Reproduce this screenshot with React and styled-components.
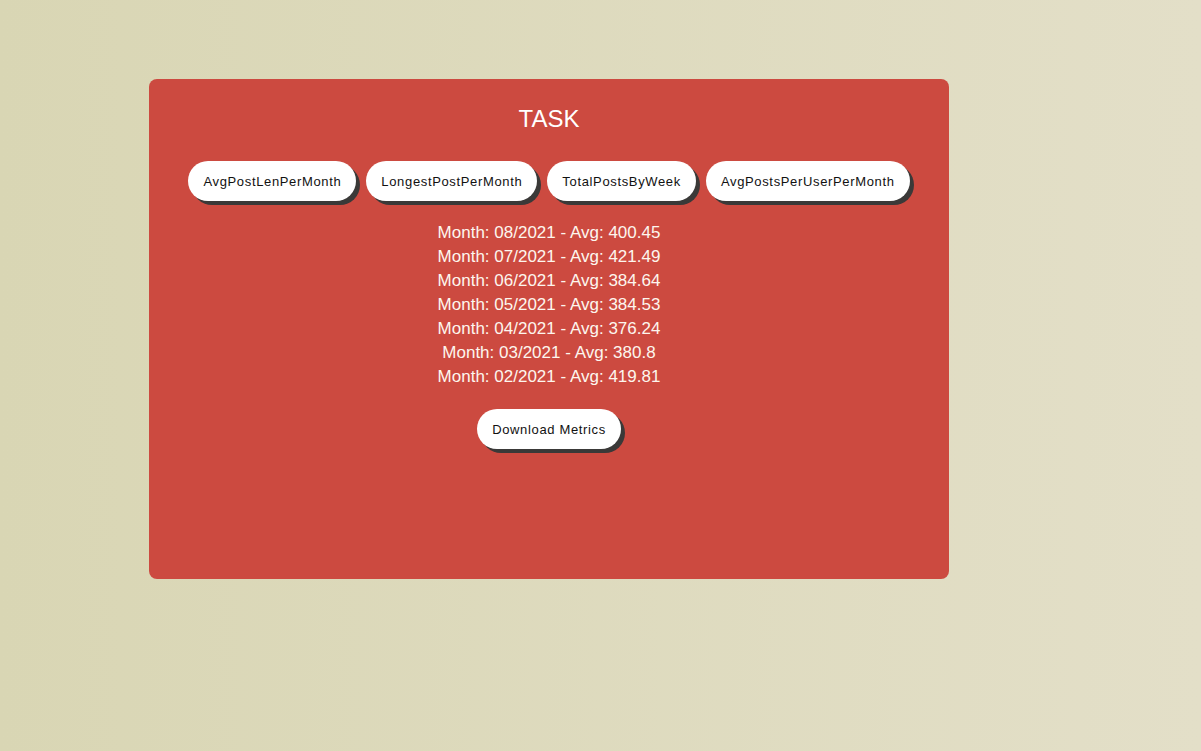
import React from 'react'
import styled, { createGlobalStyle } from 'styled-components'

const GlobalStyle = createGlobalStyle`
  html, body {
    margin: 0;
    padding: 0;
  }
  body {
    min-height: 751px;
    background: linear-gradient(to right, #d9d6b4, #e3dfc8);
    font-family: "Liberation Sans", Arial, sans-serif;
  }
`

const StyledPage = styled.div`
  padding: 79px 0 0 149px;
`

const StyledCard = styled.div`
  width: 800px;
  height: 500px;
  box-sizing: border-box;
  background: #cc4a40;
  border-radius: 8px;
  padding-top: 26px;
  display: flex;
  flex-direction: column;
  align-items: center;
`

const StyledTitle = styled.h1`
  margin: 0;
  font-size: 24px;
  line-height: 28px;
  font-weight: 400;
  color: #ffffff;
`

const StyledTabs = styled.div`
  display: flex;
  gap: 10px;
  margin-top: 28px;
`

const StyledButton = styled.button`
  height: 40px;
  padding: 0 15px;
  border: none;
  border-radius: 20px;
  background: #ffffff;
  color: #111;
  font-family: "Liberation Sans", Arial, sans-serif;
  font-size: 13px;
  letter-spacing: 0.65px;
  box-shadow: 4px 4px 0 #3a3938;
  cursor: pointer;
  margin-top: ${p => p.$spaced ? '20px' : '0'};
`

const StyledList = styled.div`
  margin-top: 20px;
  display: flex;
  flex-direction: column;
  align-items: center;
`

const StyledRow = styled.div`
  color: #fdf6ee;
  font-size: 17px;
  line-height: 24px;
`

const tabs = ['AvgPostLenPerMonth', 'LongestPostPerMonth', 'TotalPostsByWeek', 'AvgPostsPerUserPerMonth']

const metrics = [
  ['08/2021', '400.45'],
  ['07/2021', '421.49'],
  ['06/2021', '384.64'],
  ['05/2021', '384.53'],
  ['04/2021', '376.24'],
  ['03/2021', '380.8'],
  ['02/2021', '419.81'],
]

const App = () => {
  return (
    <StyledPage>
      <GlobalStyle />
      <StyledCard>
        <StyledTitle>TASK</StyledTitle>
        <StyledTabs>
          {tabs.map(t => <StyledButton key={t}>{t}</StyledButton>)}
        </StyledTabs>
        <StyledList>
          {metrics.map(([month, avg]) => (
            <StyledRow key={month}>Month: {month} - Avg: {avg}</StyledRow>
          ))}
        </StyledList>
        <StyledButton $spaced>Download Metrics</StyledButton>
      </StyledCard>
    </StyledPage>
  )
}

export default App
